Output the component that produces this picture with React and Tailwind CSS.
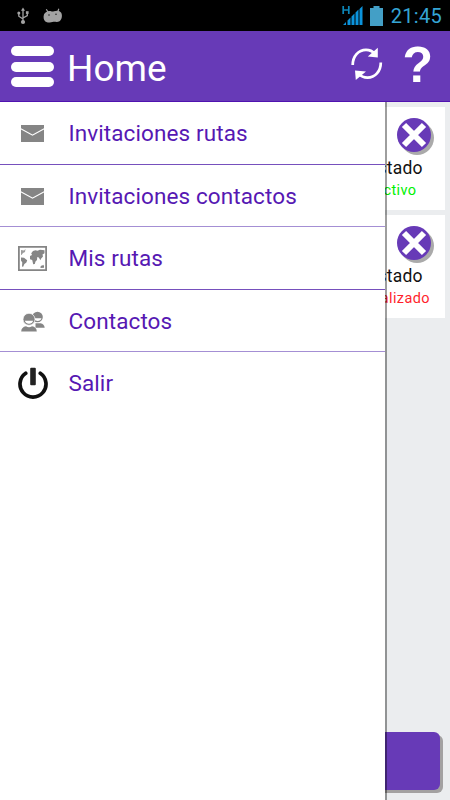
import clsx from 'clsx'

function UsbIcon() {
  return (
    <svg width="12" height="18" viewBox="0 0 12 18" fill="none" stroke="#a3a3a3" strokeWidth="1.3">
      <path d="M6 3v11M1.8 6v3.2L6 12M10.3 6v2.6L6 11" />
      <path d="M6 .5l2 3.3H4z" fill="#a3a3a3" stroke="none" />
      <circle cx="6" cy="15" r="2.1" fill="#a3a3a3" stroke="none" />
      <circle cx="1.8" cy="6" r="1.5" fill="#a3a3a3" stroke="none" />
      <path d="M8.9 4.2h2.7v2.7H8.9z" fill="#a3a3a3" stroke="none" />
    </svg>
  )
}

function DroidIcon() {
  return (
    <svg width="20" height="16" viewBox="0 0 20 16">
      <path d="M3.3 1.2l1.8 3M15.8.8l-1 3" stroke="#a3a3a3" strokeWidth="1.2" />
      <path d="M5 3.300C8 2.600 8.500 4.200 11 3.300c3-1 6-.6 7.200 1.500C19.600 7.300 19 11.500 16.500 13.200c-1.800 1.200-4 .5-6 .6-2 .1-4.300 1.300-6.500.5C1.400 13.400.3 10.800.6 8.200.9 5.600 2.600 3.900 5 3.300z" fill="#a3a3a3" />
      <circle cx="6" cy="7" r=".8" fill="#222" />
      <circle cx="13" cy="6.300" r=".8" fill="#222" />
    </svg>
  )
}

function SignalIcon() {
  return (
    <svg width="22" height="21" viewBox="0 0 22 21">
      <path d="M1.200 1v8M6.800 1v8M1 5h6" stroke="#0c86b8" strokeWidth="1.700" fill="none" />
      <path d="M1 20l3-3v3zM5.500 15.500l3-3V20h-3zM9.500 11.500l3-3V20h-3zM13.500 7.500l3-3V20h-3zM17.500 4l3-3v19h-3z" fill="#0b93dc" />
    </svg>
  )
}

function RefreshIcon() {
  return (
    <svg width="32" height="34" viewBox="0 0 32 34">
      <path d="M1.700 18C1.700 9 7.500 2.800 15 2.800c4 0 6.500 1.200 9 4M29.800 15.500c0 9-5.800 15.200-13.300 15.200-4 0-6.500-1.200-9-4" fill="none" stroke="#fff" strokeWidth="2.700" />
      <path d="M26.800.8v9.600l-10-1zM4.800 33l-.8-9.600 11 1z" fill="#fff" />
    </svg>
  )
}

function MailIcon() {
  return (
    <svg width="23" height="17" viewBox="0 0 23 17">
      <path d="M0 0h23v3.200L11.500 9.500 0 3.200z" fill="#858585" />
      <path d="M0 4.400l11.500 6.300L23 4.400V17H0z" fill="#858585" />
    </svg>
  )
}

function MapIcon() {
  return (
    <svg width="29" height="25" viewBox="0 0 29 25">
      <path d="M.9.9h27.200v23.200H.9z" fill="none" stroke="#858585" strokeWidth="1.800" />
      <g fill="#858585">
        <path d="M3 4l3 .5 1.500-1.500L7 6l-2 1-1.500 2L3 9z" opacity=".8" />
        <path d="M3 11.500l3 .2 3.200 2.500-.8 2.300-2 1.500-1.400 3-1-.8.300-3.700L3 14.500z" />
        <path d="M12 10l2-1-.8-1.800L15 5l2.500-.7 2 .5L22 3.800l4.500.5v3l-2 1.200.5 2-2 2.200-.6 1.500-1.600-2.700-1.500-.5-.3 3-1.500 1.500-.7 2.500-1.600.2-1-4.200-2.200-.8z" />
        <path d="M22.500 20.500l1.500-1.300 1.500.4.500-1v3.200l-3.500.3z" />
      </g>
    </svg>
  )
}

function ContactsIcon() {
  return (
    <svg width="24" height="21" viewBox="0 0 24 21" fill="#858585">
      <circle cx="16.500" cy="6" r="5.300" />
      <path d="M14.500 12.300h5c2.500.6 3.900 2 4.200 4.500h-9.200z" />
      <path d="M13 7.200h7.500c-.6 1.800-2 2.700-3.800 2.700-1.500 0-2.800-.5-3.700-2.700z" fill="#fff" />
      <circle cx="8" cy="8.300" r="6" stroke="#fff" strokeWidth=".7" />
      <path d="M.2 20.500c.2-3.200 1.800-4.600 4.800-5.200 2 1.200 4 1.200 6 0 3 .6 4.600 2 4.800 5.200z" />
      <path d="M3.800 9.700h8.400c-.6 2-2.200 3-4.200 3s-3.600-1-4.200-3z" fill="#fff" />
    </svg>
  )
}

function PowerIcon() {
  return (
    <svg width="30" height="33" viewBox="0 0 30 33">
      <path d="M7.700 6.300a13 13 0 1 0 14.600 0" fill="none" stroke="#111" strokeWidth="3.700" strokeLinecap="round" />
      <rect x="12.200" y=".8" width="5.600" height="17.500" rx="1" fill="#222" />
    </svg>
  )
}

const menuItems = [
  { label: 'Invitaciones rutas', icon: MailIcon, line: 'border-[#7650bd]' },
  { label: 'Invitaciones contactos', icon: MailIcon, line: 'border-[#a48fd4]' },
  { label: 'Mis rutas', icon: MapIcon, line: 'border-[#7650bd]' },
  { label: 'Contactos', icon: ContactsIcon, line: 'border-[#a48fd4]' },
  { label: 'Salir', icon: PowerIcon, line: 'border-transparent' },
]

const routes = [
  { status: 'Activo', color: 'text-[#00f000]' },
  { status: 'Finalizado', color: 'text-[#ff1f2d]' },
]

function RouteCard({ status, color }) {
  return (
    <div className="flex h-[103px] justify-end bg-white">
      <div className="flex w-[100px] flex-col items-center">
        <div className="mt-[11px] mr-[14px] flex h-[34px] w-[34px] items-center justify-center self-end rounded-full bg-[#673ab7] shadow-[3px_3px_0_#aaaaaa]">
          <svg width="26" height="26" viewBox="0 0 26 26">
            <path d="M3 3l20 20M23 3L3 23" stroke="#fff" strokeWidth="6" />
          </svg>
        </div>
        <span className="mt-[4px] text-[17.5px] leading-6 tracking-[0.2px] text-[#111]">Estado</span>
        <span className={clsx('mt-px text-[14.5px] leading-5 tracking-[0.4px]', color)}>{status}</span>
      </div>
    </div>
  )
}

export default function App() {
  return (
    <div className="flex h-[800px] w-[450px] flex-col overflow-hidden bg-[#ebedef] font-['Roboto',sans-serif]">
      {/* Status bar */}
      <div className="flex h-[31px] shrink-0 items-center bg-black pr-[8px] pl-[17px]">
        <UsbIcon />
        <div className="ml-[14px]">
          <DroidIcon />
        </div>
        <div className="ml-auto flex items-center">
          <SignalIcon />
          <svg className="ml-[6px]" width="13" height="20" viewBox="0 0 13 20">
            <path d="M3.500 0h6v2H13v18H0V2h3.500z" fill="#439fc6" />
          </svg>
          <span className="ml-[8px] text-[20px] leading-5 tracking-[0.3px] text-[#35a5d5]">21:45</span>
        </div>
      </div>

      {/* Header */}
      <header className="flex h-[71px] shrink-0 items-center border-b border-[#5012b0] bg-[#673ab7] pr-[17px] pl-[11px] text-white">
        <div className="mt-px flex flex-col gap-[5.5px]">
          <div className="h-[10px] w-[43px] rounded-full bg-white" />
          <div className="h-[10px] w-[43px] rounded-full bg-white" />
          <div className="h-[10px] w-[43px] rounded-full bg-white" />
        </div>
        <h1 className="mt-[4px] ml-[13px] text-[37px] leading-none">Home</h1>
        <div className="ml-auto flex items-center">
          <div className="mb-[5px]">
            <RefreshIcon />
          </div>
          <span className="mb-[2px] ml-[19px] font-['Liberation_Sans',sans-serif] text-[50px] leading-none font-bold">?</span>
        </div>
      </header>

      <div className="relative flex-1">
        <main className="flex h-full flex-col px-[5px] pt-[5px]">
          <div className="flex flex-col gap-[5px]">
            {routes.map((route) => (
              <RouteCard key={route.status} {...route} />
            ))}
          </div>
          <div className="mt-auto mr-[5px] mb-[10px] h-[58px] rounded-[6px] bg-[#673ab7] shadow-[3px_3px_0_#a3a1a1]" />
        </main>

        {/* Navigation drawer */}
        <nav className="absolute inset-y-0 left-0 w-[385px] bg-white shadow-[2px_0_0_rgba(0,0,0,0.38)] [clip-path:inset(0_-2px_0_0)]">
          {menuItems.map(({ label, icon: Icon, line }) => (
            <div key={label} className={clsx('flex h-[62.5px] items-center border-b', line)}>
              <div className="mt-[2px] flex w-[65px] justify-center">
                <Icon />
              </div>
              <span className="mt-[3px] ml-[3.5px] text-[22.5px] tracking-[0.1px] text-[#5618b3]">{label}</span>
            </div>
          ))}
        </nav>
      </div>
    </div>
  )
}
